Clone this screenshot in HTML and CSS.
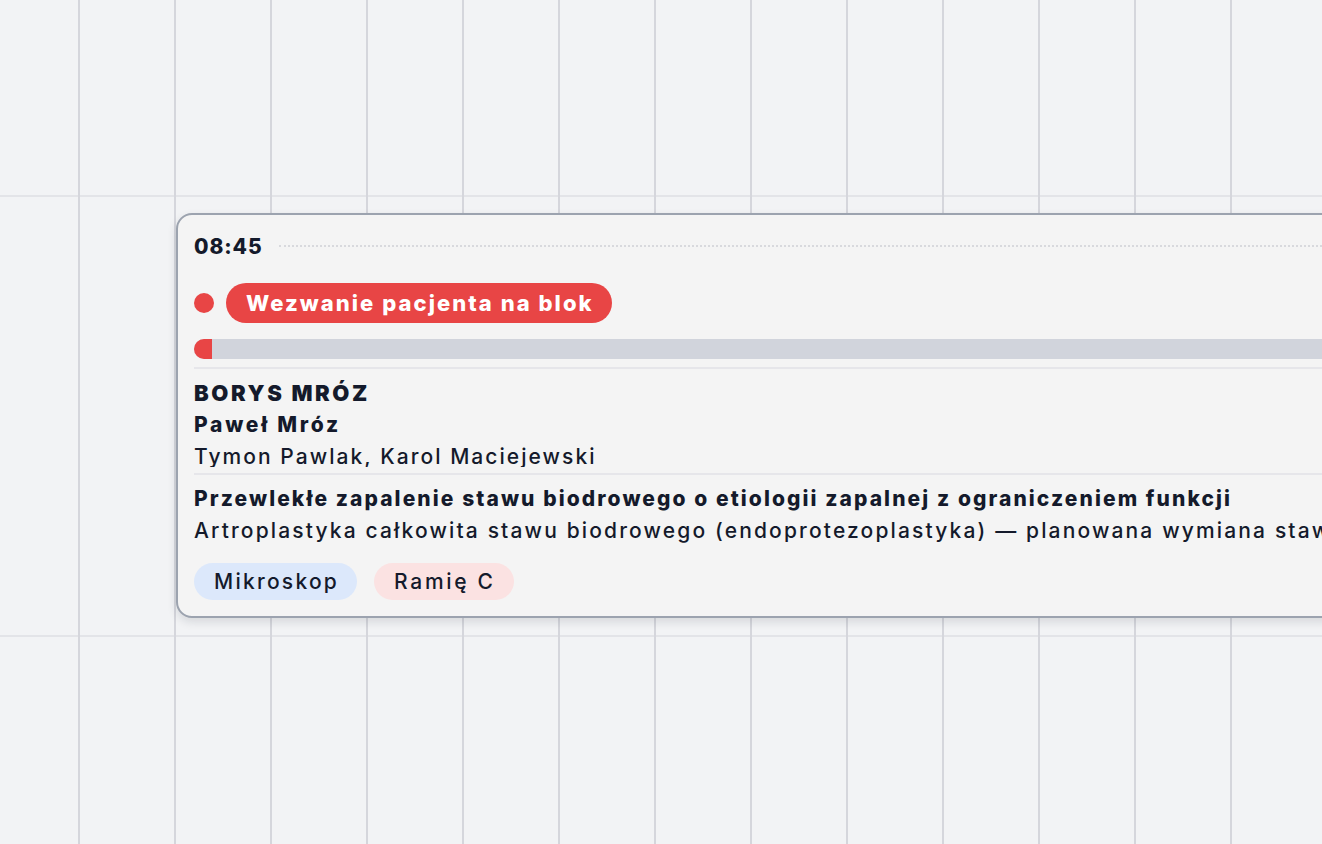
FILE: index.html
```html
<!DOCTYPE html>
<html lang="pl">
<head>
<meta charset="utf-8">
<title>Blok operacyjny</title>
<link rel="stylesheet" href="styles.css">
</head>
<body>
<div class="canvas">
  <article class="card">
    <div class="time-row">
      <span class="time">08:45</span>
      <span class="time-line"></span>
    </div>
    <div class="status-row">
      <span class="status-dot"></span>
      <span class="status-badge">Wezwanie pacjenta na blok</span>
    </div>
    <div class="progress"><span class="progress-fill" style="width:18px"></span></div>
    <div class="people">
      <div class="patient">BORYS MRÓZ</div>
      <div class="surgeon">Paweł Mróz</div>
      <div class="assist">Tymon Pawlak, Karol Maciejewski</div>
    </div>
    <div class="procedure">
      <div class="diagnosis">Przewlekłe zapalenie stawu biodrowego o etiologii zapalnej z ograniczeniem funkcji</div>
      <div class="operation">Artroplastyka całkowita stawu biodrowego (endoprotezoplastyka) — planowana wymiana stawu biodrowego na endoprotezę</div>
    </div>
    <div class="tags">
      <span class="tag tag-blue">Mikroskop</span>
      <span class="tag tag-red">Ramię C</span>
    </div>
  </article>
</div>
</body>
</html>
```
FILE: styles.css
```css
* { box-sizing: border-box; }
html, body { margin: 0; padding: 0; }
body {
  width: 1322px;
  height: 844px;
  overflow: hidden;
  font-family: "Inter", "Noto Sans", sans-serif;
  color: #141a2b;
  background-color: #f2f3f5;
  background-image:
    linear-gradient(90deg, #d5d6dc 0 2px, transparent 2px),
    linear-gradient(180deg, #e3e4e8 0 2px, transparent 2px);
  background-size: 96px 100%, 100% 440px;
  background-position: 78px 0, 0 195px;
}
.canvas { position: relative; width: 1322px; height: 844px; }
.card {
  position: absolute;
  left: 176px;
  top: 213px;
  width: 1500px;
  height: 405px;
  padding: 17px 16px 16px;
  background: #f4f4f4;
  border: 2px solid #9ca3af;
  border-radius: 16px;
  box-shadow: 0 4px 10px rgba(17, 24, 39, 0.12);
  display: flex;
  flex-direction: column;
}
.time-row { display: flex; align-items: center; height: 28px; gap: 16px; }
.time { font-size: 21px; font-weight: 800; line-height: 28px; letter-spacing: 0.9px; padding-top: 2px; }
.time-line { flex: 1; border-top: 2px dotted #d8d9dd; }
.status-row { display: flex; align-items: center; gap: 12px; margin-top: 23px; height: 40px; }
.status-dot { width: 20px; height: 20px; border-radius: 50%; background: #e84545; }
.status-badge {
  height: 40px; line-height: 40px; padding: 0 18px 0 20px; border-radius: 20px;
  background: #e84545; color: #fff; font-size: 22px; font-weight: 800; letter-spacing: 2.05px;
}
.progress { margin-top: 16px; height: 20px; background: #d1d4dc; border-radius: 10px 0 0 10px; overflow: hidden; display: flex; }
.progress-fill { background: #e84545; height: 100%; }
.people {
  margin-top: 8px; border-top: 2px solid #e6e6ea; padding-top: 8px;
  line-height: 32px; font-size: 21px;
}
.people > div { white-space: nowrap; }
.patient { font-size: 22px; font-weight: 900; letter-spacing: 2.6px; }
.surgeon { font-weight: 800; letter-spacing: 2.75px; }
.assist { font-weight: 500; letter-spacing: 2.05px; height: 26px; overflow: hidden; }
.procedure { margin-top: 6px; border-top: 2px solid #e6e6ea; padding-top: 8px; line-height: 32px; font-size: 21px; }
.procedure > div { white-space: nowrap; }
.diagnosis { font-weight: 800; letter-spacing: 2.08px; }
.operation { font-weight: 500; letter-spacing: 2.15px; }
.tags { display: flex; gap: 17px; margin-top: 16px; }
.tag { height: 37px; line-height: 37px; padding: 0 18px 0 20px; border-radius: 19px; font-size: 21px; font-weight: 500; letter-spacing: 2.25px; }
.tag-blue { background: #dce8fb; }
.tag-red { background: #fbe2e2; letter-spacing: 2.7px; }
```
